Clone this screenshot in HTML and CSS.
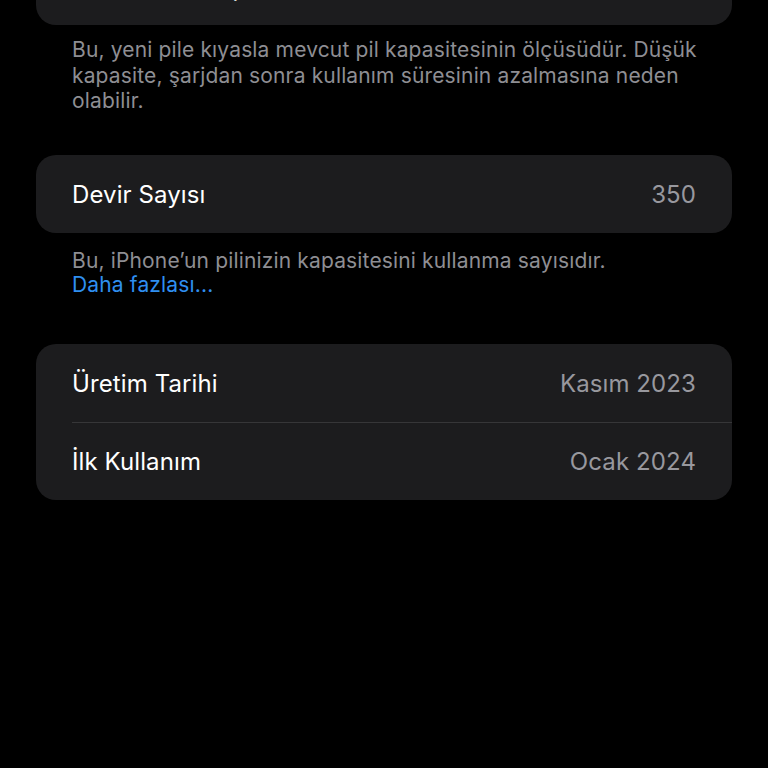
FILE: index.html
```html
<!DOCTYPE html>
<html>
	<head>
		<meta charset="utf-8">
		<title>Pil Sağlığı</title>
		<link rel="stylesheet" href="styles.css">
	</head>
	<body>
	<div class="page">
		<div class="group first">
			<div class="row">
				<span class="label">Maksimum Kapasite</span>
				<span class="value">%100</span>
			</div>
		</div>
		<p class="note note-a">Bu, yeni pile kıyasla mevcut pil kapasitesinin ölçüsüdür. Düşük kapasite, şarjdan sonra kullanım süresinin azalmasına neden olabilir.</p>

		<div class="group">
			<div class="row">
				<span class="label">Devir Sayısı</span>
				<span class="value">350</span>
			</div>
		</div>
		<p class="note note-b">Bu, iPhone’un pilinizin kapasitesini kullanma sayısıdır.<br><a href="">Daha fazlası...</a></p>

		<div class="group">
			<div class="row">
				<span class="label">Üretim Tarihi</span>
				<span class="value">Kasım 2023</span>
			</div>
			<div class="row">
				<span class="label">İlk Kullanım</span>
				<span class="value">Ocak 2024</span>
			</div>
		</div>
	</div>
	</body>
</html>
```

FILE: styles.css
```css
* {margin: 0;padding: 0;box-sizing: border-box;}
html, body {
	background: #000;
	height: 100%;
	overflow: hidden;
}
body {
	font-family: Inter, "Noto Sans", sans-serif;
	color: #fff;
}
.page {
	padding: 0 36px;
}
.group {
	background: #1c1c1e;
	border-radius: 20px;
	overflow: hidden;
}
.group.first {
	margin-top: -53px;
}
.row {
	height: 78px;
	display: flex;
	align-items: center;
	justify-content: space-between;
	padding: 2px 36px 0;
	font-size: 24px;
	letter-spacing: 0.1px;
	position: relative;
}
.row + .row::before {
	content: "";
	position: absolute;
	left: 36px;
	right: 0;
	top: 0;
	height: 1px;
	background: #363638;
}
.row .value {
	color: #98989e;
}
.note {
	padding: 0 20px 0 36px;
	font-size: 21px;
	line-height: 25.5px;
	letter-spacing: 0.15px;
	color: #8e8e93;
	margin-bottom: 46px;
}
.note-a {
	margin-top: 12px;
	margin-bottom: 41px;
}
.note-b {
	margin-top: 16px;
	line-height: 24.5px;
}
.note a {
	color: #2f8ff0;
	text-decoration: none;
}
```
